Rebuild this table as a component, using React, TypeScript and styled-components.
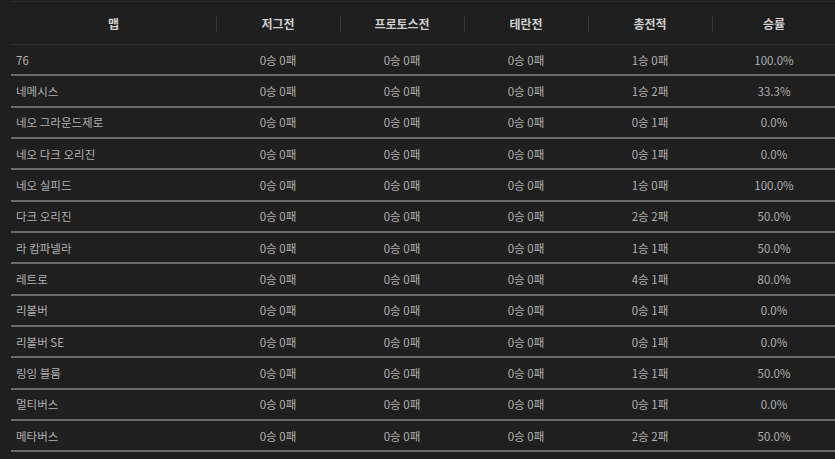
import React from "react";
import styled, { createGlobalStyle } from "styled-components";

const Global = createGlobalStyle`
  html, body { margin: 0; padding: 0; background: #1f1f1f; }
  body { font-family: "Noto Sans CJK KR", "Noto Sans", sans-serif; }
`;

const Page = styled.div`
  padding: 1px 0 0 11px;
  background: #1f1f1f;
  min-height: 459px;
  box-sizing: border-box;
  overflow: hidden;
`;

const Table = styled.table`
  width: 825px;
  border-collapse: collapse;
  table-layout: fixed;
  border-top: 1px solid #2b2b2b;
`;

const Col = styled.col<{ $wide?: boolean }>`
  width: ${(p) => (p.$wide ? "205px" : "124px")};
`;

const HeadCell = styled.th<{ $sep?: boolean }>`
  height: 42px;
  padding: 0;
  font-size: 12px;
  font-weight: 700;
  color: #cfcfcf;
  text-align: center;
  border-bottom: 1px solid #303030;
  position: relative;
  &::before {
    content: "";
    display: ${(p) => (p.$sep ? "block" : "none")};
    position: absolute;
    left: 0;
    top: 14px;
    width: 1px;
    height: 16px;
    background: #353535;
  }
`;

const Row = styled.tr`
  border-bottom: 2px solid #6c6c6c;
`;

const Cell = styled.td<{ $left?: boolean }>`
  height: 29.33px;
  padding: 0 0 0 ${(p) => (p.$left ? "5px" : "0")};
  font-size: 11.5px;
  color: #b0b0b0;
  text-align: ${(p) => (p.$left ? "left" : "center")};
  white-space: nowrap;
`;

const headers = ["맵", "저그전", "프로토스전", "테란전", "총전적", "승률"];

const rows: [string, string, string, string, string, string][] = [
  ["76", "0승 0패", "0승 0패", "0승 0패", "1승 0패", "100.0%"],
  ["네메시스", "0승 0패", "0승 0패", "0승 0패", "1승 2패", "33.3%"],
  ["네오 그라운드제로", "0승 0패", "0승 0패", "0승 0패", "0승 1패", "0.0%"],
  ["네오 다크 오리진", "0승 0패", "0승 0패", "0승 0패", "0승 1패", "0.0%"],
  ["네오 실피드", "0승 0패", "0승 0패", "0승 0패", "1승 0패", "100.0%"],
  ["다크 오리진", "0승 0패", "0승 0패", "0승 0패", "2승 2패", "50.0%"],
  ["라 캄파넬라", "0승 0패", "0승 0패", "0승 0패", "1승 1패", "50.0%"],
  ["레트로", "0승 0패", "0승 0패", "0승 0패", "4승 1패", "80.0%"],
  ["리볼버", "0승 0패", "0승 0패", "0승 0패", "0승 1패", "0.0%"],
  ["리볼버 SE", "0승 0패", "0승 0패", "0승 0패", "0승 1패", "0.0%"],
  ["링잉 블룸", "0승 0패", "0승 0패", "0승 0패", "1승 1패", "50.0%"],
  ["멀티버스", "0승 0패", "0승 0패", "0승 0패", "0승 1패", "0.0%"],
  ["메타버스", "0승 0패", "0승 0패", "0승 0패", "2승 2패", "50.0%"],
];

export default function App() {
  return (
    <>
      <Global />
      <Page>
        <Table>
          <colgroup>
            {headers.map((h, i) => (
              <Col key={h} $wide={i === 0} />
            ))}
          </colgroup>
          <thead>
            <tr>
              {headers.map((h, i) => (
                <HeadCell key={h} $sep={i > 0}>
                  {h}
                </HeadCell>
              ))}
            </tr>
          </thead>
          <tbody>
            {rows.map((r) => (
              <Row key={r[0]}>
                {r.map((v, i) => (
                  <Cell key={i} $left={i === 0}>
                    {v}
                  </Cell>
                ))}
              </Row>
            ))}
          </tbody>
        </Table>
      </Page>
    </>
  );
}
